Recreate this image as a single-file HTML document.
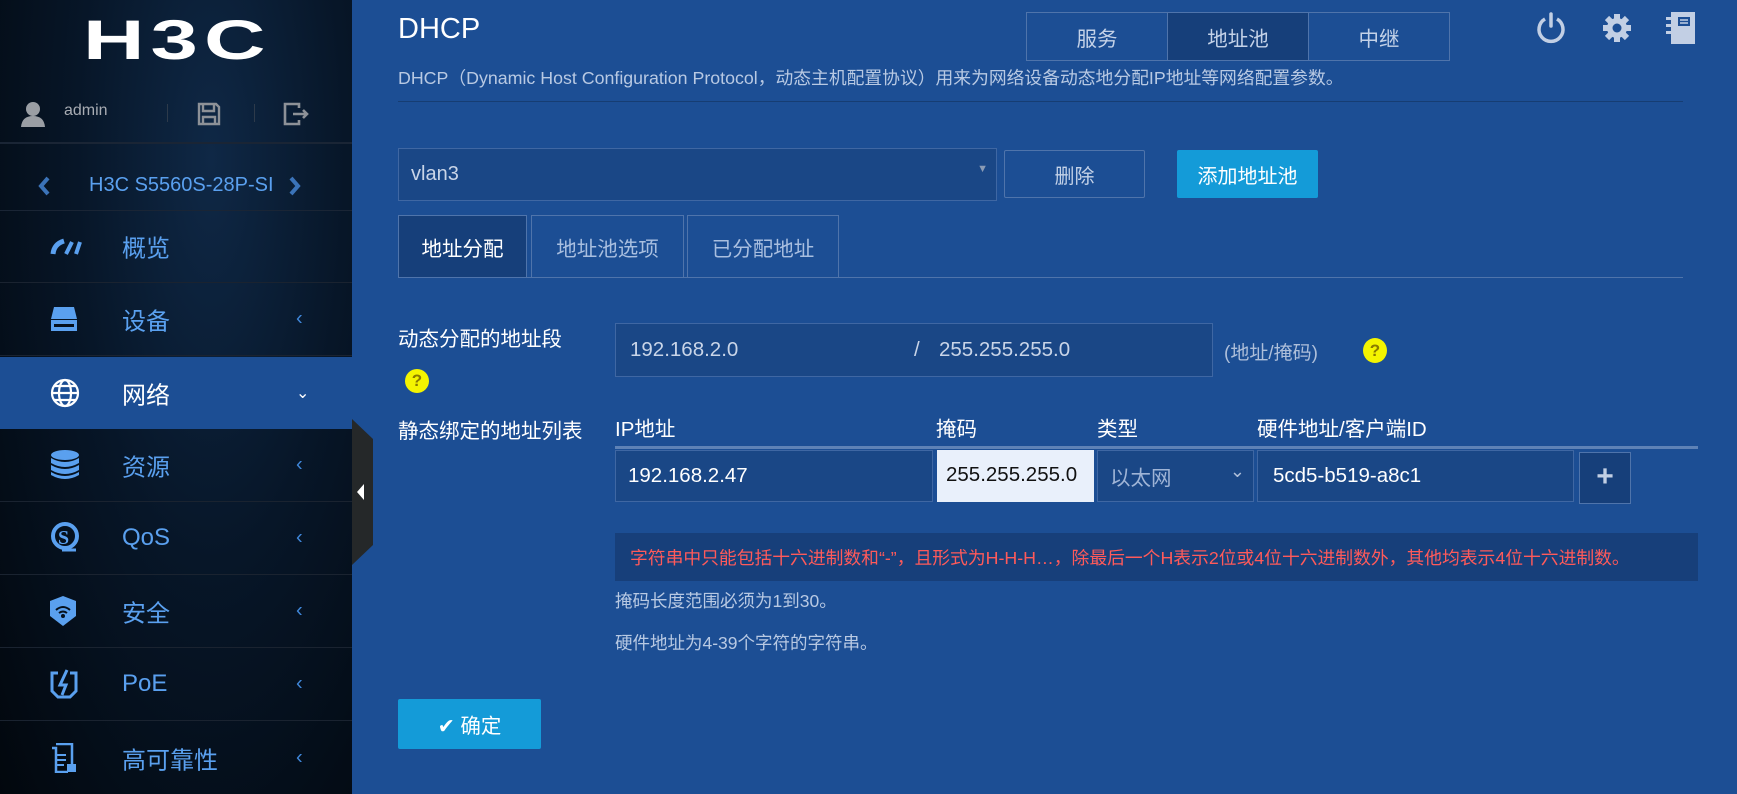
<!DOCTYPE html>
<html><head><meta charset="utf-8"><style>
*{margin:0;padding:0;box-sizing:border-box}
body{width:1737px;height:794px;overflow:hidden;background:#1c4e94;font-family:"Liberation Sans","Noto Sans CJK SC",sans-serif;position:relative}
.a{position:absolute}
#side{left:0;top:0;width:352px;height:794px;background:radial-gradient(ellipse at 60% 20%,#0f2846 0%,#071628 45%,#02070d 100%)}
.mi{position:absolute;left:0;width:352px;height:73px;border-bottom:1px solid #1a2330;color:#5aa0ef;font-size:24px}
.mi .t{position:absolute;left:122px;top:50%;transform:translateY(-50%)}
.mi .c{position:absolute;left:296px;top:50%;transform:translateY(-50%);font-size:20px;color:#3f86d8}
.mi svg{position:absolute;left:50px;top:50%;transform:translateY(-50%)}
.box{position:absolute;border:1px solid #3f67a3;background:#1a4786}
.lbl{color:#fff;font-size:20.5px}
.hint{color:#b8c9e3;font-size:17.5px}
</style></head><body>
<div id="side" class="a">
 <div class="a" style="left:83px;top:12px;color:#fff;font-size:56px;font-weight:bold;letter-spacing:4px;font-family:'Liberation Sans',sans-serif;transform:scaleX(1.52);transform-origin:left;line-height:56px">H3C</div>
 <svg class="a" style="left:21px;top:101px" width="24" height="26" viewBox="0 0 24 26"><circle cx="12" cy="8" r="7" fill="#9a9ea4"/><path d="M0 26 Q1 15 12 15 Q23 15 24 26Z" fill="#9a9ea4"/></svg>
 <div class="a" style="left:64px;top:102px;color:#a8acb3;font-size:16px">admin</div>
 <div class="a" style="left:167px;top:104px;width:1px;height:18px;background:#2d3a4a"></div>
 <svg class="a" style="left:197px;top:102px" width="24" height="24" viewBox="0 0 24 24"><path d="M2 2h17l3 3v17H2Z M6 2v7h11V2 M6 22v-7h12v7" fill="none" stroke="#8d9197" stroke-width="2.4"/></svg>
 <div class="a" style="left:254px;top:104px;width:1px;height:18px;background:#2d3a4a"></div>
 <svg class="a" style="left:283px;top:102px" width="26" height="24" viewBox="0 0 26 24"><path d="M16 6V2H2v20h14v-4 M10 12h14 M20 8l4 4-4 4" fill="none" stroke="#8d9197" stroke-width="2.6"/></svg>
 <div class="a" style="left:0;top:142px;width:352px;height:2px;background:#1a2535"></div>
 <svg class="a" style="left:38px;top:176px" width="12" height="20" viewBox="0 0 12 20"><path d="M10 2L3 10l7 8" fill="none" stroke="#3b73b8" stroke-width="4"/></svg>
 <div class="a" style="left:89px;top:174px;color:#5aa0ef;font-size:20px">H3C S5560S-28P-SI</div>
 <svg class="a" style="left:289px;top:176px" width="12" height="20" viewBox="0 0 12 20"><path d="M2 2l7 8-7 8" fill="none" stroke="#3b73b8" stroke-width="4"/></svg>
 <div class="a" style="left:0;top:210px;width:352px;height:1px;background:#1a2535"></div>
 <div class="mi" style="top:210px"><svg width="34" height="20" viewBox="0 0 34 20"><path d="M3 18 Q4 8 14 5" stroke="#5aa0ef" stroke-width="5" fill="none"/><path d="M16 18 L22 6 M26 18 L30 6" stroke="#5aa0ef" stroke-width="4"/></svg><span class="t">概览</span></div>
 <div class="mi" style="top:283px"><svg width="28" height="26" viewBox="0 0 28 26"><path d="M4 1h20l3 12H1Z" fill="#5aa0ef"/><rect x="1" y="14" width="26" height="11" fill="#5aa0ef"/><rect x="4" y="18" width="20" height="3" fill="#06101c"/></svg><span class="t">设备</span><span class="c">‹</span></div>
 <div class="mi" style="top:357px;height:72px;background:#1c4e94;color:#fff;border:none"><svg width="30" height="30" viewBox="0 0 30 30"><g fill="none" stroke="#fff" stroke-width="2.2"><circle cx="15" cy="15" r="13"/><ellipse cx="15" cy="15" rx="6" ry="13"/><path d="M2 15h26M4 8h22M4 22h22"/></g></svg><span class="t">网络</span><span class="c" style="color:#fff;font-size:16px">⌄</span></div>
 <div class="mi" style="top:429px"><svg width="30" height="30" viewBox="0 0 30 30"><g fill="#5aa0ef"><ellipse cx="15" cy="5" rx="14" ry="5"/><path d="M1 8q14 8 28 0v5q-14 8-28 0Z"/><path d="M1 15q14 8 28 0v5q-14 8-28 0Z"/><path d="M1 22q14 8 28 0v3q-14 8-28 0Z"/></g></svg><span class="t">资源</span><span class="c">‹</span></div>
 <div class="mi" style="top:502px"><svg width="30" height="32" viewBox="0 0 30 32"><circle cx="15" cy="14" r="12" fill="none" stroke="#5aa0ef" stroke-width="4"/><text x="8" y="22" font-size="20" font-weight="bold" fill="#5aa0ef" font-family="Liberation Serif">S</text><path d="M12 28h14" stroke="#5aa0ef" stroke-width="3"/></svg><span class="t">QoS</span><span class="c">‹</span></div>
 <div class="mi" style="top:575px"><svg width="26" height="30" viewBox="0 0 26 30"><path d="M13 0 L26 5 V20 L13 30 L0 20 V5Z" fill="#5aa0ef"/><path d="M6 14q7-6 14 0M9 17q4-3 8 0" stroke="#06101c" stroke-width="2" fill="none"/><circle cx="13" cy="20" r="2" fill="#06101c"/></svg><span class="t">安全</span><span class="c">‹</span></div>
 <div class="mi" style="top:648px"><svg width="28" height="30" viewBox="0 0 28 30"><path d="M8 4H2v18l6 6h12l6-6V4h-6" fill="none" stroke="#5aa0ef" stroke-width="3"/><path d="M17 1L10 16h6l-4 10" stroke="#5aa0ef" stroke-width="3" fill="none"/></svg><span class="t">PoE</span><span class="c">‹</span></div>
 <div class="mi" style="top:721px;border:none"><svg width="28" height="30" viewBox="0 0 28 30"><path d="M6 1h16v20M2 5h4v24h12" fill="none" stroke="#5aa0ef" stroke-width="2.5"/><path d="M6 12h10M6 17h10M6 22h8" stroke="#5aa0ef" stroke-width="2"/><rect x="17" y="21" width="9" height="8" fill="#5aa0ef"/></svg><span class="t">高可靠性</span><span class="c">‹</span></div>
</div>
<svg class="a" style="left:352px;top:419px" width="21" height="146" viewBox="0 0 21 146"><path d="M0 0L21 20V126L0 146Z" fill="#252829"/><path d="M5 73L12 65V81Z" fill="#fff"/></svg>

<div class="a" style="left:398px;top:13px;color:#fff;font-size:29px">DHCP</div>
<div class="a hint" style="left:398px;top:64px;font-size:17.8px">DHCP（Dynamic Host Configuration Protocol，动态主机配置协议）用来为网络设备动态地分配IP地址等网络配置参数。</div>
<div class="a" style="left:398px;top:101px;width:1285px;height:1px;background:#163d73"></div>

<div class="a" style="left:1026px;top:12px;width:424px;height:49px;border:1px solid #4f74ab;display:flex;color:#c4d2e8;font-size:20.5px">
 <div style="flex:1;display:flex;align-items:center;justify-content:center;border-right:1px solid #4f74ab">服务</div>
 <div style="flex:1;display:flex;align-items:center;justify-content:center;border-right:1px solid #4f74ab;background:#163f7a">地址池</div>
 <div style="flex:1;display:flex;align-items:center;justify-content:center">中继</div>
</div>
<svg class="a" style="left:1536px;top:12px" width="30" height="32" viewBox="0 0 30 32"><path d="M9 7A12 12 0 1 0 21 7" fill="none" stroke="#c2cfe4" stroke-width="3.5"/><path d="M15 2v12" stroke="#c2cfe4" stroke-width="3.5" stroke-linecap="round"/></svg>
<svg class="a" style="left:1601px;top:12px" width="32" height="32" viewBox="0 0 32 32"><g fill="#c2cfe4"><circle cx="16" cy="16" r="10"/><g stroke="#c2cfe4" stroke-width="6"><path d="M16 2v28M2 16h28M6 6l20 20M26 6L6 26"/></g></g><circle cx="16" cy="16" r="4.5" fill="#1c4e94"/></svg>
<svg class="a" style="left:1666px;top:12px" width="30" height="32" viewBox="0 0 30 32"><rect x="5" y="0" width="24" height="32" fill="#c2cfe4"/><g fill="#c2cfe4"><rect x="0" y="5" width="7" height="3"/><rect x="0" y="12" width="7" height="3"/><rect x="0" y="19" width="7" height="3"/></g><rect x="12" y="5" width="12" height="9" fill="#1c4e94"/><path d="M14 8h8M14 11h8" stroke="#c2cfe4" stroke-width="1.5"/></svg>

<div class="box" style="left:398px;top:148px;width:599px;height:53px;color:#c9d5e8;font-size:20px;padding:14px 12px">vlan3<span style="position:absolute;right:8px;top:14px;font-size:11px;color:#8a9bb5">▼</span></div>
<div class="a" style="left:1004px;top:150px;width:141px;height:48px;border:1px solid #4f74ab;border-radius:2px;color:#c4d2e8;font-size:20px;display:flex;align-items:center;justify-content:center">删除</div>
<div class="a" style="left:1177px;top:150px;width:141px;height:48px;background:#149bd8;border-radius:2px;color:#fff;font-size:20px;display:flex;align-items:center;justify-content:center">添加地址池</div>

<div class="a" style="left:398px;top:277px;width:1285px;height:1px;background:#4f74ab"></div>
<div class="a" style="left:398px;top:215px;width:129px;height:63px;background:#163f7a;border:1px solid #4f74ab;color:#fff;font-size:20.5px;display:flex;align-items:center;justify-content:center">地址分配</div>
<div class="a" style="left:531px;top:215px;width:153px;height:63px;border:1px solid #4f74ab;border-bottom:none;color:#a9bfe0;font-size:20.5px;display:flex;align-items:center;justify-content:center">地址池选项</div>
<div class="a" style="left:687px;top:215px;width:152px;height:63px;border:1px solid #4f74ab;border-bottom:none;color:#a9bfe0;font-size:20.5px;display:flex;align-items:center;justify-content:center">已分配地址</div>

<div class="a lbl" style="left:398px;top:322px">动态分配的地址段</div>
<div class="a" style="left:405px;top:369px;width:24px;height:24px;border-radius:50%;background:#f4f400;color:#8a7a00;font-size:17px;font-weight:bold;text-align:center;line-height:24px">?</div>
<div class="box" style="left:615px;top:323px;width:598px;height:54px;color:#c9d5e8;font-size:20.5px"><span class="a" style="left:14px;top:14px">192.168.2.0</span><span class="a" style="left:298px;top:14px">/</span><span class="a" style="left:323px;top:14px">255.255.255.0</span></div>
<div class="a hint" style="left:1224px;top:338px;font-size:19px;color:#aebfda">(地址/掩码)</div>
<div class="a" style="left:1363px;top:338px;width:24px;height:25px;border-radius:50%;background:#f4f400;color:#8a7a00;font-size:17px;font-weight:bold;text-align:center;line-height:25px">?</div>

<div class="a lbl" style="left:398px;top:414px">静态绑定的地址列表</div>
<div class="a lbl" style="left:615px;top:412px">IP地址</div>
<div class="a lbl" style="left:936px;top:412px">掩码</div>
<div class="a lbl" style="left:1097px;top:412px">类型</div>
<div class="a lbl" style="left:1257px;top:412px">硬件地址/客户端ID</div>
<div class="a" style="left:615px;top:446px;width:1083px;height:3px;background:#5e82b6"></div>
<div class="box" style="left:615px;top:450px;width:318px;height:52px;color:#fff;font-size:20.5px;padding:13px 12px">192.168.2.47</div>
<div class="a" style="left:937px;top:450px;width:157px;height:52px;background:#e9f0fb;color:#111;font-size:20.5px;padding:13px 9px">255.255.255.0</div>
<div class="box" style="left:1097px;top:450px;width:157px;height:52px;color:#9fb4d6;font-size:20.5px;padding:10px 12px">以太网<span style="position:absolute;right:8px;top:10px;font-size:18px;color:#b0c0da">⌄</span></div>
<div class="box" style="left:1257px;top:450px;width:317px;height:52px;color:#fff;font-size:20.5px;padding:13px 15px">5cd5-b519-a8c1</div>
<div class="a" style="left:1579px;top:452px;width:52px;height:52px;background:#163f7a;border:1px solid #4f74ab;color:#c2cfe4;font-size:30px;font-weight:bold;text-align:center;line-height:48px">+</div>

<div class="a" style="left:615px;top:533px;width:1083px;height:48px;background:#173f7a;color:#ff5a5a;font-size:17.8px;padding:11px 15px;white-space:nowrap">字符串中只能包括十六进制数和“-”，且形式为H-H-H…，除最后一个H表示2位或4位十六进制数外，其他均表示4位十六进制数。</div>
<div class="a hint" style="left:615px;top:588px">掩码长度范围必须为1到30。</div>
<div class="a hint" style="left:615px;top:630px">硬件地址为4-39个字符的字符串。</div>

<div class="a" style="left:398px;top:699px;width:143px;height:50px;background:#149bd8;border-radius:2px;color:#fff;font-size:20.5px;display:flex;align-items:center;justify-content:center">✔ 确定</div>
</body></html>
